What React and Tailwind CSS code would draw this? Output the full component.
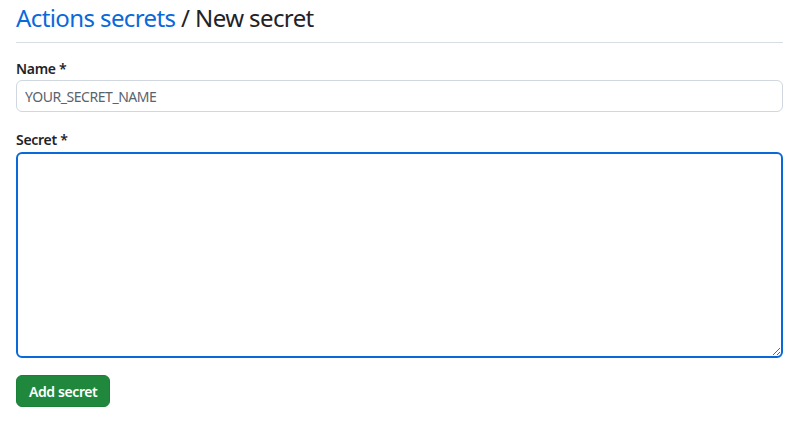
export default function App() {
  return (
    <div className="bg-white w-[799px] h-[422px] px-4 pt-[2px]" style={{ fontFamily: '"Noto Sans", "Liberation Sans", sans-serif' }}>
      <div className="border-b border-[#d8dee4] pb-[8px]">
        <h2 className="text-[24px] leading-[32px] font-normal text-[#1f2328] tracking-[-0.6px]">
          <span className="text-[#0969da]">Actions secrets</span> / New secret
        </h2>
      </div>
      <div className="mt-[16px]">
        <label className="block text-[14px] leading-[20px] font-semibold text-[#1f2328] mb-[1px] tracking-[-0.3px]">Name *</label>
        <input
          className="block w-full h-[32px] px-[8px] text-[14px] tracking-[-0.45px] border border-[#d0d7de] rounded-[6px] bg-white text-[#1f2328] placeholder-[#59636e] outline-none"
          placeholder="YOUR_SECRET_NAME"
        />
      </div>
      <div className="mt-[18px]">
        <label className="block text-[14px] leading-[20px] font-semibold text-[#1f2328] mb-[2px] tracking-[-0.3px]">Secret *</label>
        <textarea className="block w-full h-[206px] border-2 border-[#0969da] rounded-[6px] bg-white outline-none" />
      </div>
      <button className="mt-[17px] h-[32px] px-[12px] rounded-[6px] bg-[#1f883d] text-white text-[14px] font-semibold tracking-[-0.4px] border border-[#1a7f37]">
        Add secret
      </button>
    </div>
  );
}
